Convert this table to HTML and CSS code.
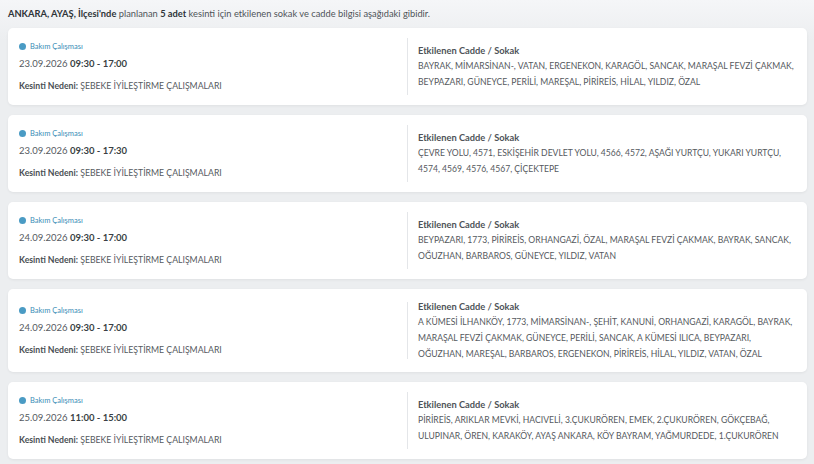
FILE: index.html
```html
<!DOCTYPE html>
<html lang="tr">
<head>
<meta charset="utf-8">
<link rel="stylesheet" href="styles.css">
</head>
<body>
<div class="page">
  <p class="intro"><b>ANKARA, AYAŞ, İlçesi'nde</b> planlanan <b>5 adet</b> kesinti için etkilenen sokak ve cadde bilgisi aşağıdaki gibidir.</p>

  <div class="list">
    <div class="card">
      <div class="left">
        <div class="type"><span class="dot"></span>Bakım Çalışması</div>
        <div class="date">23.09.2026 <b>09:30 - 17:00</b></div>
        <div class="reason"><b>Kesinti Nedeni:</b> ŞEBEKE İYİLEŞTİRME ÇALIŞMALARI</div>
      </div>
      <div class="divider"></div>
      <div class="right">
        <div class="rtitle">Etkilenen Cadde / Sokak</div>
        <div class="streets">BAYRAK, MİMARSİNAN-, VATAN, ERGENEKON, KARAGÖL, SANCAK, MARAŞAL FEVZİ ÇAKMAK, BEYPAZARI, GÜNEYCE, PERİLİ, MAREŞAL, PİRİREİS, HİLAL, YILDIZ, ÖZAL</div>
      </div>
    </div>

    <div class="card">
      <div class="left">
        <div class="type"><span class="dot"></span>Bakım Çalışması</div>
        <div class="date">23.09.2026 <b>09:30 - 17:30</b></div>
        <div class="reason"><b>Kesinti Nedeni:</b> ŞEBEKE İYİLEŞTİRME ÇALIŞMALARI</div>
      </div>
      <div class="divider"></div>
      <div class="right">
        <div class="rtitle">Etkilenen Cadde / Sokak</div>
        <div class="streets">ÇEVRE YOLU, 4571, ESKİŞEHİR DEVLET YOLU, 4566, 4572, AŞAĞI YURTÇU, YUKARI YURTÇU, 4574, 4569, 4576, 4567, ÇİÇEKTEPE</div>
      </div>
    </div>

    <div class="card">
      <div class="left">
        <div class="type"><span class="dot"></span>Bakım Çalışması</div>
        <div class="date">24.09.2026 <b>09:30 - 17:00</b></div>
        <div class="reason"><b>Kesinti Nedeni:</b> ŞEBEKE İYİLEŞTİRME ÇALIŞMALARI</div>
      </div>
      <div class="divider"></div>
      <div class="right">
        <div class="rtitle">Etkilenen Cadde / Sokak</div>
        <div class="streets">BEYPAZARI, 1773, PİRİREİS, ORHANGAZİ, ÖZAL, MARAŞAL FEVZİ ÇAKMAK, BAYRAK, SANCAK, OĞUZHAN, BARBAROS, GÜNEYCE, YILDIZ, VATAN</div>
      </div>
    </div>

    <div class="card">
      <div class="left">
        <div class="type"><span class="dot"></span>Bakım Çalışması</div>
        <div class="date">24.09.2026 <b>09:30 - 17:00</b></div>
        <div class="reason"><b>Kesinti Nedeni:</b> ŞEBEKE İYİLEŞTİRME ÇALIŞMALARI</div>
      </div>
      <div class="divider"></div>
      <div class="right">
        <div class="rtitle">Etkilenen Cadde / Sokak</div>
        <div class="streets">A KÜMESİ İLHANKÖY, 1773, MİMARSİNAN-, ŞEHİT, KANUNİ, ORHANGAZİ, KARAGÖL, BAYRAK, MARAŞAL FEVZİ ÇAKMAK, GÜNEYCE, PERİLİ, SANCAK, A KÜMESİ ILICA, BEYPAZARI, OĞUZHAN, MAREŞAL, BARBAROS, ERGENEKON, PİRİREİS, HİLAL, YILDIZ, VATAN, ÖZAL</div>
      </div>
    </div>

    <div class="card">
      <div class="left">
        <div class="type"><span class="dot"></span>Bakım Çalışması</div>
        <div class="date">25.09.2026 <b>11:00 - 15:00</b></div>
        <div class="reason"><b>Kesinti Nedeni:</b> ŞEBEKE İYİLEŞTİRME ÇALIŞMALARI</div>
      </div>
      <div class="divider"></div>
      <div class="right">
        <div class="rtitle">Etkilenen Cadde / Sokak</div>
        <div class="streets">PİRİREİS, ARIKLAR MEVKİ, HACIVELİ, 3.ÇUKURÖREN, EMEK, 2.ÇUKURÖREN, GÖKÇEBAĞ, ULUPINAR, ÖREN, KARAKÖY, AYAŞ ANKARA, KÖY BAYRAM, YAĞMURDEDE, 1.ÇUKURÖREN</div>
      </div>
    </div>
  </div>
</div>
</body>
</html>
```
FILE: styles.css
```css
html, body {
  margin: 0;
  padding: 0;
}
body {
  background: linear-gradient(#f5f6f8, #eceef0 40px);
  font-family: Lato, "Open Sans", sans-serif;
  color: #555a60;
  width: 814px;
  height: 464px;
  overflow: hidden;
}
.page {
  padding: 8px 7px 0 8px;
}
.intro {
  margin: 0 0 8px;
  font-size: 9.3px;
  line-height: 12px;
  color: #4e5358;
}
.intro b {
  color: #2e3338;
  font-weight: 700;
}
.list {
  display: flex;
  flex-direction: column;
  gap: 10px;
}
.card {
  background: #fff;
  border-radius: 5px;
  box-shadow: 0 1px 3px rgba(0,0,0,0.06);
  padding: 10px 11px;
  min-height: 57px;
  display: grid;
  grid-template-columns: 1fr 1px 1fr;
  align-items: center;
}
.left {
  display: flex;
  flex-direction: column;
}
.type {
  display: flex;
  align-items: center;
  gap: 4px;
  font-size: 7.5px;
  color: #3a8db6;
  line-height: 10px;
}
.dot {
  width: 7px;
  height: 7px;
  border-radius: 50%;
  background: #4a9bc4;
}
.date {
  font-size: 9.5px;
  line-height: 12px;
  margin-top: 6px;
}
.date b {
  color: #3a3f44;
}
.reason {
  font-size: 8.7px;
  line-height: 12px;
  margin-top: 10px;
}
.reason b {
  color: #4a4f54;
}
.divider {
  width: 1px;
  height: 57px;
  background: #e4e6e9;
}
.right {
  padding-left: 10px;
}
.rtitle {
  font-size: 9.3px;
  font-weight: 700;
  line-height: 15px;
  color: #4e5358;
}
.streets {
  font-size: 8.6px;
  line-height: 16px;
  color: #55595e;
}
```
